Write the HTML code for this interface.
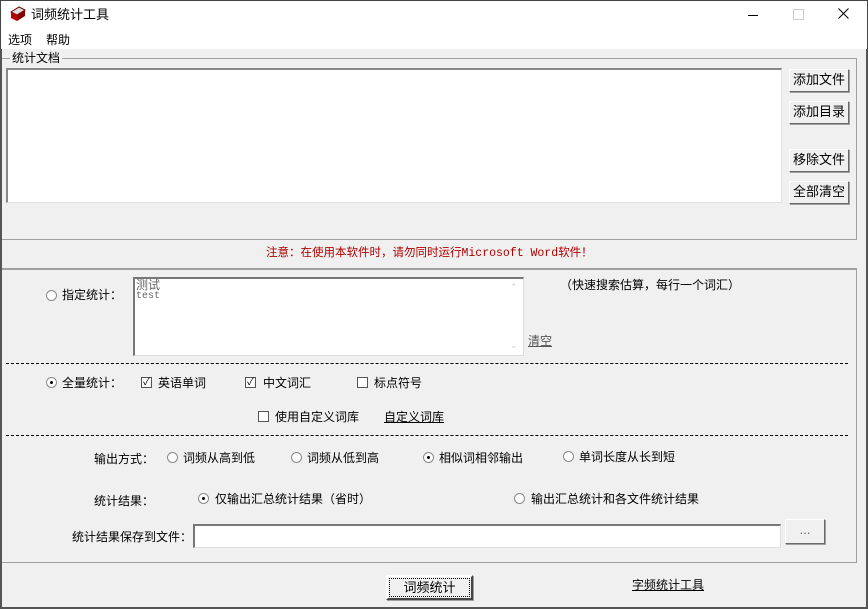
<!DOCTYPE html><html><head><meta charset="utf-8"><style>
*{margin:0;padding:0;box-sizing:border-box}
body{width:868px;height:609px;background:#f0f0f0;font-family:"Liberation Sans","Noto Sans CJK SC",sans-serif;font-size:12px;color:#000;position:relative;overflow:hidden}
.a{position:absolute;white-space:nowrap}
.btn{position:absolute;background:#f0f0f0;border:1px solid;border-color:#fff #696969 #696969 #fff;box-shadow:1px 1px 0 #a0a0a0;text-align:center;font-size:13px;line-height:19px}
.rad{position:absolute;width:11px;height:11px;border-radius:50%;border:1px solid #888;background:#fff}
.rad.on::after{content:"";position:absolute;left:3px;top:3px;width:3px;height:3px;border-radius:50%;background:#000}
.chk{position:absolute;width:11px;height:11px;border:1px solid #555;background:#fff;font-size:10px;line-height:9px;text-align:center}
.t{position:absolute;font-size:12px;white-space:nowrap;line-height:14px}
.dash{position:absolute;left:6px;width:842px;border-top:1px dashed #000}
</style></head><body>
<div class="a" style="left:0;top:0;width:868px;height:49px;background:#fff;border:1px solid #444;border-bottom:none"></div>
<svg class="a" style="left:9px;top:6px" width="18" height="16"><path d="M2 6 L10 1 L16 4 L8 9 Z" fill="#ddd" stroke="#600"/><path d="M2 6 L8 9 L8 15 L2 12 Z" fill="#b00"/><path d="M8 9 L16 4 L16 10 L8 15 Z" fill="#800"/></svg>
<div class="t" style="left:31px;top:8px;font-size:13px">词频统计工具</div>
<svg class="a" style="left:740px;top:5px" width="120" height="22">
<line x1="8" y1="10.5" x2="18" y2="10.5" stroke="#000"/>
<rect x="53.5" y="4.5" width="10" height="10" fill="none" stroke="#ccc"/>
<path d="M98.5 3.5 L108.5 13.5 M108.5 3.5 L98.5 13.5" stroke="#000" stroke-width="1"/>
</svg>
<div class="t" style="left:8px;top:33px;font-size:12px">选项</div>
<div class="t" style="left:46px;top:33px;font-size:12px">帮助</div>
<div class="a" style="left:0;top:49px;width:2px;height:560px;background:#555"></div>
<div class="a" style="left:866px;top:49px;width:2px;height:560px;background:#555"></div>
<div class="a" style="left:2px;top:58px;width:855px;height:182px;border:1px solid #a0a0a0;border-left:none"></div>
<div class="t" style="left:10px;top:51px;background:#f0f0f0;padding:0 2px;font-size:12px">统计文档</div>
<div class="a" style="left:6px;top:68px;width:776px;height:135px;background:#fff;border:1px solid;border-color:#888 #e0e0e0 #e0e0e0 #888;border-width:2px 1px 1px 2px"></div>
<div class="btn" style="left:789px;top:69px;width:60px;height:23px">添加文件</div>
<div class="btn" style="left:789px;top:101px;width:60px;height:23px">添加目录</div>
<div class="btn" style="left:789px;top:149px;width:60px;height:23px">移除文件</div>
<div class="btn" style="left:789px;top:181px;width:60px;height:23px">全部清空</div>
<div class="t" style="left:266px;top:247px;color:#b00000;font-family:'Liberation Mono','Noto Sans CJK SC',monospace;font-size:11.5px">注意：在使用本软件时，请勿同时运行Microsoft Word软件！</div>
<div class="a" style="left:2px;top:268px;width:855px;height:295px;border:1px solid #a0a0a0;border-left:none;border-top:2px solid #a0a0a0"></div>
<div class="rad" style="left:46px;top:290px"></div>
<div class="t" style="left:62px;top:288px">指定统计：</div>
<div class="a" style="left:133px;top:277px;width:391px;height:79px;background:#fff;border:1px solid;border-color:#777 #ddd #ddd #777;border-width:2px 1px 1px 2px"></div>
<div class="t" style="left:136px;top:278px;color:#666">测试</div>
<div class="t" style="left:136px;top:291px;color:#666;font-family:'Liberation Mono',monospace;font-size:10px;line-height:12px">test</div>
<div class="t" style="left:510px;top:280px;color:#ccc;font-size:9px">⌃</div>
<div class="t" style="left:510px;top:338px;color:#ccc;font-size:9px">⌄</div>
<div class="t" style="left:528px;top:334px;color:#555;text-decoration:underline">清空</div>
<div class="t" style="left:560px;top:278px">（快速搜索估算，每行一个词汇）</div>
<div class="dash" style="top:363px"></div>
<div class="rad on" style="left:46px;top:377px"></div>
<div class="t" style="left:62px;top:376px">全量统计：</div>
<div class="chk" style="left:141px;top:377px">✓</div><div class="t" style="left:158px;top:376px">英语单词</div>
<div class="chk" style="left:245px;top:377px">✓</div><div class="t" style="left:263px;top:376px">中文词汇</div>
<div class="chk" style="left:357px;top:377px"></div><div class="t" style="left:374px;top:376px">标点符号</div>
<div class="chk" style="left:258px;top:411px"></div><div class="t" style="left:275px;top:410px">使用自定义词库</div>
<div class="t" style="left:384px;top:410px;text-decoration:underline">自定义词库</div>
<div class="dash" style="top:435px"></div>
<div class="t" style="left:94px;top:452px">输出方式：</div>
<div class="rad" style="left:167px;top:452px"></div><div class="t" style="left:183px;top:451px">词频从高到低</div>
<div class="rad" style="left:291px;top:452px"></div><div class="t" style="left:307px;top:451px">词频从低到高</div>
<div class="rad on" style="left:423px;top:452px"></div><div class="t" style="left:439px;top:451px">相似词相邻输出</div>
<div class="rad" style="left:563px;top:451px"></div><div class="t" style="left:579px;top:450px">单词长度从长到短</div>
<div class="t" style="left:94px;top:494px">统计结果：</div>
<div class="rad on" style="left:198px;top:493px"></div><div class="t" style="left:215px;top:492px">仅输出汇总统计结果（省时）</div>
<div class="rad" style="left:514px;top:493px"></div><div class="t" style="left:531px;top:492px">输出汇总统计和各文件统计结果</div>
<div class="t" style="left:72px;top:530px">统计结果保存到文件：</div>
<div class="a" style="left:193px;top:524px;width:588px;height:24px;background:#fff;border:1px solid;border-color:#777 #ddd #ddd #777;border-width:2px 1px 1px 2px"></div>
<div class="btn" style="left:785px;top:519px;width:40px;height:25px;color:#666;line-height:20px">...</div>
<div class="btn" style="left:386px;top:575px;width:87px;height:25px;border-color:#fff #444 #444 #fff;border-width:2px"><div style="border:1px dotted #000;margin:1px;line-height:17px">词频统计</div></div>
<div class="t" style="left:632px;top:578px;text-decoration:underline">字频统计工具</div>
<div class="a" style="left:0;top:607px;width:868px;height:2px;background:#555"></div>
</body></html>
